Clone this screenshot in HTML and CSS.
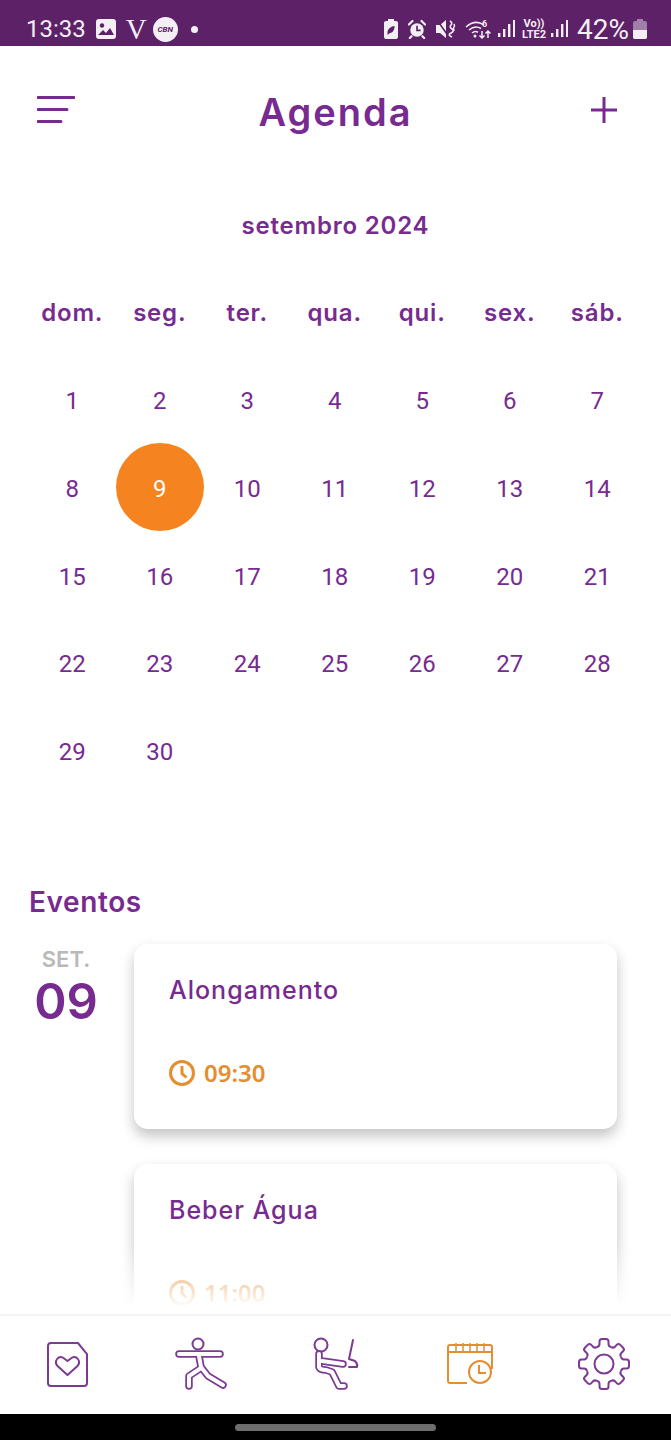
FILE: index.html
```html
<!DOCTYPE html>
<html lang="pt-BR">
<head>
    <meta charset="UTF-8">
    <meta name="viewport" content="width=device-width, initial-scale=1.0">
    <title>Agenda</title>
    <link rel="stylesheet" href="styles.css">
</head>
<body>
<div class="phone">

    <!-- Status bar -->
    <div class="status-bar">
        <div class="status-left">
            <span class="clock">13:33</span>
            <svg class="st-icon" width="20" height="20" viewBox="0 0 20 20"><rect x="0" y="0" width="20" height="20" rx="3" fill="#f4eef5"/><circle cx="6" cy="6.500" r="2.200" fill="#5c2166"/><path d="M2 16l5-5 3 3 4-5 4 7z" fill="#5c2166"/></svg>
            <span class="v-logo">V</span>
            <span class="cbn">CBN</span>
            <span class="dot"></span>
        </div>
        <div class="status-right">
            <svg class="st-icon" width="14" height="20" viewBox="0 0 14 20"><path d="M4 0h6v2h2a2 2 0 0 1 2 2v14a2 2 0 0 1-2 2H2a2 2 0 0 1-2-2V4a2 2 0 0 1 2-2h2z" fill="#f4eef5"/><path d="M3.500 14c0-4 3-6.500 7-7 .3 4-2 7-5 7.200L3.500 16z" fill="#5c2166"/></svg>
            <svg class="st-icon alarm" width="18" height="20" viewBox="0 0 20 20"><circle cx="10" cy="11" r="7.500" fill="#f4eef5"/><path d="M1 5l4-4M19 5l-4-4M4 18l-2 2M16 18l2 2" stroke="#f4eef5" stroke-width="2.400" stroke-linecap="round"/><path d="M10 6.500V11.500h4" stroke="#5c2166" stroke-width="1.800" fill="none"/></svg>
            <svg class="st-icon mute" width="20" height="20" viewBox="0 0 20 20"><path d="M0 6h4l6-5v18l-6-5H0z" fill="#f4eef5"/><path d="M1 1l12 17" stroke="#5c2166" stroke-width="1.500"/><path d="M14 2q3 2 1 4t1 4-1 4 1 4M18 5q1 2 0 3t0 4" stroke="#f4eef5" stroke-width="1.600" fill="none"/></svg>
            <svg class="st-icon wifi" width="26" height="22" viewBox="0 0 26 22"><path d="M1 9q9-8 18-2M4 12q6-5 12-1.500M7 15q3-2.500 6-.8" stroke="#f4eef5" stroke-width="1.600" fill="none"/><circle cx="10" cy="18" r="1.500" fill="#f4eef5"/><path d="M17 13v7m-2.500-2.500L17 20l2.500-2.500M23 20v-7m-2.500 2.500L23 13l2.500 2.500" stroke="#f4eef5" stroke-width="1.500" fill="none"/><text x="17" y="9" class="wifi-six">6</text></svg>
            <svg class="st-icon bars" width="17" height="20" viewBox="0 0 17 20"><rect x="0" y="14" width="2.400" height="4" fill="#f4eef5"/><rect x="5" y="10" width="2.400" height="8" fill="#f4eef5"/><rect x="10" y="5" width="2.400" height="13" fill="#f4eef5"/><rect x="15" y="1" width="2" height="17" fill="#f4eef5"/></svg>
            <span class="volte">Vo))<br>LTE2</span>
            <svg class="st-icon bars-2" width="17" height="20" viewBox="0 0 17 20"><rect x="0" y="14" width="2.400" height="4" fill="#f4eef5"/><rect x="5" y="10" width="2.400" height="8" fill="#f4eef5"/><rect x="10" y="5" width="2.400" height="13" fill="#f4eef5"/><rect x="15" y="1" width="2" height="17" fill="#f4eef5"/></svg>
            <span class="percent">42%</span>
            <svg class="st-icon" width="14" height="20" viewBox="0 0 14 20"><path d="M4 0h6v2h2a2 2 0 0 1 2 2v14a2 2 0 0 1-2 2H2a2 2 0 0 1-2-2V4a2 2 0 0 1 2-2h2z" fill="#a07fa8"/><path d="M0 11h14v7a2 2 0 0 1-2 2H2a2 2 0 0 1-2-2z" fill="#f4eef5"/></svg>
        </div>
    </div>

    <div class="content">
        <!-- Header -->
        <div class="header">
            <svg class="menu-icon" width="38" height="28" viewBox="0 0 38 28"><path d="M1 1.500h36M1 13.500h29M1 25.500h23" stroke="#772b90" stroke-width="3" stroke-linecap="round"/></svg>
            <h1>Agenda</h1>
            <svg class="add-icon" width="26" height="26" viewBox="0 0 26 26"><path d="M13 0v26M0 13h26" stroke="#772b90" stroke-width="3"/></svg>
        </div>

        <!-- Calendar -->
        <div class="month">setembro 2024</div>
        <div class="calendar">
            <div class="weekday">dom.</div>
            <div class="weekday">seg.</div>
            <div class="weekday">ter.</div>
            <div class="weekday">qua.</div>
            <div class="weekday">qui.</div>
            <div class="weekday">sex.</div>
            <div class="weekday">sáb.</div>
            <div class="day">1</div>
            <div class="day">2</div>
            <div class="day">3</div>
            <div class="day">4</div>
            <div class="day">5</div>
            <div class="day">6</div>
            <div class="day">7</div>
            <div class="day">8</div>
            <div class="day today"><span>9</span></div>
            <div class="day">10</div>
            <div class="day">11</div>
            <div class="day">12</div>
            <div class="day">13</div>
            <div class="day">14</div>
            <div class="day">15</div>
            <div class="day">16</div>
            <div class="day">17</div>
            <div class="day">18</div>
            <div class="day">19</div>
            <div class="day">20</div>
            <div class="day">21</div>
            <div class="day">22</div>
            <div class="day">23</div>
            <div class="day">24</div>
            <div class="day">25</div>
            <div class="day">26</div>
            <div class="day">27</div>
            <div class="day">28</div>
            <div class="day">29</div>
            <div class="day">30</div>
        </div>

        <!-- Events -->
        <h2 class="events-title">Eventos</h2>
        <div class="events">
            <div class="date-col">
                <div class="date-month">SET.</div>
                <div class="date-day">09</div>
            </div>
            <div class="cards">
                <div class="card">
                    <div class="card-title">Alongamento</div>
                    <div class="card-time">
                        <svg width="26" height="26" viewBox="0 0 26 26"><circle cx="13" cy="13" r="11.500" fill="none" stroke="#e58e2f" stroke-width="3"/><path d="M13 6v7.500l4.500 4" fill="none" stroke="#e58e2f" stroke-width="3"/></svg>
                        <span>09:30</span>
                    </div>
                </div>
                <div class="card">
                    <div class="card-title">Beber Água</div>
                    <div class="card-time">
                        <svg width="26" height="26" viewBox="0 0 26 26"><circle cx="13" cy="13" r="11.500" fill="none" stroke="#e58e2f" stroke-width="3"/><path d="M13 6v7.500l4.500 4" fill="none" stroke="#e58e2f" stroke-width="3"/></svg>
                        <span>11:00</span>
                    </div>
                </div>
            </div>
        </div>
        <div class="fade"></div>
    </div>

    <!-- Bottom navigation -->
    <div class="bottom-nav">
        <svg width="41" height="45" viewBox="0 0 41 45"><path d="M4 1h27l9 11v29a3 3 0 0 1-3 3H4a3 3 0 0 1-3-3V4a3 3 0 0 1 3-3z" fill="none" stroke="#7c3a93" stroke-width="2"/><path d="M20.500 33l-10-9c-4-5 1-11 6-8l4 3 4-3c5-3 10 3 6 8z" fill="none" stroke="#7c3a93" stroke-width="2" stroke-linejoin="round"/></svg>

        <svg width="70" height="70" viewBox="0 0 70 70">
            <circle cx="32" cy="15" r="5.500" fill="none" stroke="#7c3a93" stroke-width="2"/>
            <path d="M13 25h41M33 27l2 11 7 9 15 9M35 39l-12 8v10" fill="none" stroke="#7c3a93" stroke-width="7.500" stroke-linecap="round" stroke-linejoin="round"/>
            <path d="M13 25h41M33 27l2 11 7 9 15 9M35 39l-12 8v10" fill="none" stroke="#fff" stroke-width="4" stroke-linecap="round" stroke-linejoin="round"/>
        </svg>

        <svg width="70" height="70" viewBox="0 0 70 70">
            <circle cx="21" cy="16" r="6.500" fill="none" stroke="#7c3a93" stroke-width="2"/>
            <path d="M19 25v13q1 3 7 3l6 2 7 14h5M22 32l21 3" fill="none" stroke="#7c3a93" stroke-width="7.500" stroke-linecap="round" stroke-linejoin="round"/>
            <path d="M19 25v13q1 3 7 3l6 2 7 14h5M22 32l21 3" fill="none" stroke="#fff" stroke-width="4" stroke-linecap="round" stroke-linejoin="round"/>
            <path d="M53 11l-4 19 6 2q3 3 2 6h-8" fill="none" stroke="#7c3a93" stroke-width="2" stroke-linecap="round" stroke-linejoin="round"/>
        </svg>

        <svg width="46" height="42" viewBox="0 0 46 42">
            <path d="M20 40H3a2 2 0 0 1-2-2V4a2 2 0 0 1 2-2h40a2 2 0 0 1 2 2v22M1 9h44" fill="none" stroke="#e58e2f" stroke-width="2"/>
            <path d="M9 0v8M16 0v8M23 0v8M30 0v8M37 0v8" stroke="#e58e2f" stroke-width="1.500"/>
            <circle cx="33" cy="29" r="11" fill="#fff" stroke="#e58e2f" stroke-width="2"/>
            <path d="M32 22v8h7" fill="none" stroke="#e58e2f" stroke-width="2"/>
        </svg>

        <svg width="52" height="52" viewBox="0 0 52 52">
            <defs>
                <path id="tooth" d="M18.920 8.910Q21.500 8.500 21.500 6V3.500Q21.500 1 24 1H28Q30.500 1 30.500 3.500V6Q30.500 8.500 33.080 8.910" fill="none" stroke="#7c3a93" stroke-width="2"/>
            </defs>
            <use href="#tooth"/>
            <use href="#tooth" transform="rotate(45 26 26)"/>
            <use href="#tooth" transform="rotate(90 26 26)"/>
            <use href="#tooth" transform="rotate(135 26 26)"/>
            <use href="#tooth" transform="rotate(180 26 26)"/>
            <use href="#tooth" transform="rotate(225 26 26)"/>
            <use href="#tooth" transform="rotate(270 26 26)"/>
            <use href="#tooth" transform="rotate(315 26 26)"/>
            <circle cx="26" cy="26" r="9.500" fill="none" stroke="#7c3a93" stroke-width="2"/>
        </svg>
    </div>

    <!-- System navigation -->
    <div class="home-bar"><span></span></div>
</div>
</body>
</html>
```
FILE: styles.css
```css
* {
    box-sizing: border-box;
}

body {
    margin: 0;
    background: #fff;
    font-family: 'Inter', 'Liberation Sans', sans-serif;
    color: #772b90;
}

.phone {
    display: flex;
    flex-direction: column;
    width: 671px;
    height: 1440px;
    overflow: hidden;
}

/* Status bar */
.status-bar {
    display: flex;
    justify-content: space-between;
    align-items: center;
    flex: none;
    height: 46px;
    padding: 12px 24px 0 26px;
    background: #5c2166;
    color: #f4eef5;
    font-family: 'Roboto', sans-serif;
}

.status-left,
.status-right {
    display: flex;
    align-items: center;
}

.clock {
    font-size: 24px;
    margin-right: 10px;
}

.st-icon {
    display: block;
}

.v-logo {
    margin-left: 10px;
    font-family: 'Liberation Serif', serif;
    font-size: 29px;
    line-height: 26px;
}

.cbn {
    display: flex;
    justify-content: center;
    align-items: center;
    width: 25px;
    height: 25px;
    margin-left: 6px;
    border-radius: 50%;
    background: #f4eef5;
    color: #5c2166;
    font-size: 8px;
    font-weight: 700;
    font-style: italic;
}

.dot {
    width: 7px;
    height: 7px;
    margin-left: 13px;
    border-radius: 50%;
    background: #f4eef5;
}

.alarm { margin-left: 10px; }
.mute { margin-left: 10px; }
.wifi { margin-left: 9px; }
.bars { margin-left: 7px; }
.bars-2 { margin-left: 5px; }

.wifi-six {
    font-size: 9px;
    font-weight: 700;
    fill: #f4eef5;
}

.volte {
    margin-left: 7px;
    font-size: 11px;
    font-weight: 700;
    line-height: 11px;
    text-align: center;
}

.percent {
    margin-left: 9px;
    margin-right: 4px;
    font-size: 28px;
}

/* Header */
.content {
    position: relative;
    flex: 1;
    overflow: hidden;
}

.header {
    display: grid;
    grid-template-columns: 1fr auto 1fr;
    align-items: center;
    height: 60px;
    margin-top: 36px;
    padding: 0 37px;
}

.header h1 {
    margin: 0;
    font-size: 38px;
    font-weight: 600;
    letter-spacing: 2px;
}

.menu-icon {
    margin-top: -4px;
}

.add-icon {
    justify-self: end;
    margin-right: 17px;
    margin-top: -4px;
}

/* Calendar */
.month {
    margin-top: 64px;
    font-size: 24px;
    font-weight: 600;
    letter-spacing: 0.8px;
    line-height: 40px;
    text-align: center;
}

.calendar {
    display: grid;
    grid-template-columns: repeat(7, 87.5px);
    grid-auto-rows: 87.6px;
    margin-top: 22px;
    padding: 0 28.5px;
}

.weekday,
.day {
    display: flex;
    justify-content: center;
    align-items: center;
}

.weekday {
    padding-top: 2px;
    font-size: 24px;
    font-weight: 600;
    letter-spacing: 0.8px;
}

.day {
    padding-top: 4px;
    font-family: 'Roboto', sans-serif;
    font-size: 24px;
}

.day.today {
    padding-top: 0;
}

.today span {
    display: flex;
    justify-content: center;
    align-items: center;
    flex: none;
    width: 88px;
    height: 88px;
    padding-top: 4px;
    border-radius: 50%;
    background: #f58420;
    color: #fff;
}

/* Events */
.events-title {
    margin: 91px 0 0 29px;
    font-size: 28px;
    font-weight: 600;
    letter-spacing: 0.6px;
    line-height: 34px;
}

.events {
    display: flex;
    margin-top: 25px;
    padding-left: 29px;
}

.date-col {
    flex: none;
    width: 74px;
    text-align: center;
}

.date-month {
    color: #b9b9b9;
    font-size: 22px;
    font-weight: 600;
    line-height: 30px;
}

.date-day {
    font-size: 49px;
    font-weight: 600;
    line-height: 56px;
}

.cards {
    display: flex;
    flex-direction: column;
    gap: 35px;
    width: 483px;
    margin-left: 31px;
}

.card {
    height: 185px;
    padding: 30px 35px 0;
    border-radius: 14px;
    background: #fff;
    box-shadow: 0 7px 14px rgba(0, 0, 0, 0.24);
}

.card-title {
    font-size: 25px;
    font-weight: 500;
    letter-spacing: 1px;
    line-height: 32px;
}

.card-time {
    display: flex;
    align-items: center;
    gap: 9px;
    height: 32px;
    margin-top: 51px;
    color: #e58e2f;
    font-family: 'Noto Sans', sans-serif;
    font-size: 24px;
    font-weight: 600;
}

.fade {
    position: absolute;
    left: 0;
    right: 0;
    bottom: 0;
    height: 70px;
    background: linear-gradient(to bottom, rgba(255, 255, 255, 0), #fff 90%);
}

/* Bottom navigation */
.bottom-nav {
    display: grid;
    grid-template-columns: repeat(5, 1fr);
    justify-items: center;
    align-items: center;
    flex: none;
    height: 100px;
    padding-bottom: 2px;
    border-top: 2px solid #f4f4f4;
    background: #fff;
}

.home-bar {
    display: flex;
    justify-content: center;
    align-items: center;
    flex: none;
    height: 26px;
    background: #000;
}

.home-bar span {
    width: 201px;
    height: 7px;
    border-radius: 4px;
    background: #6e6e6e;
}
```
